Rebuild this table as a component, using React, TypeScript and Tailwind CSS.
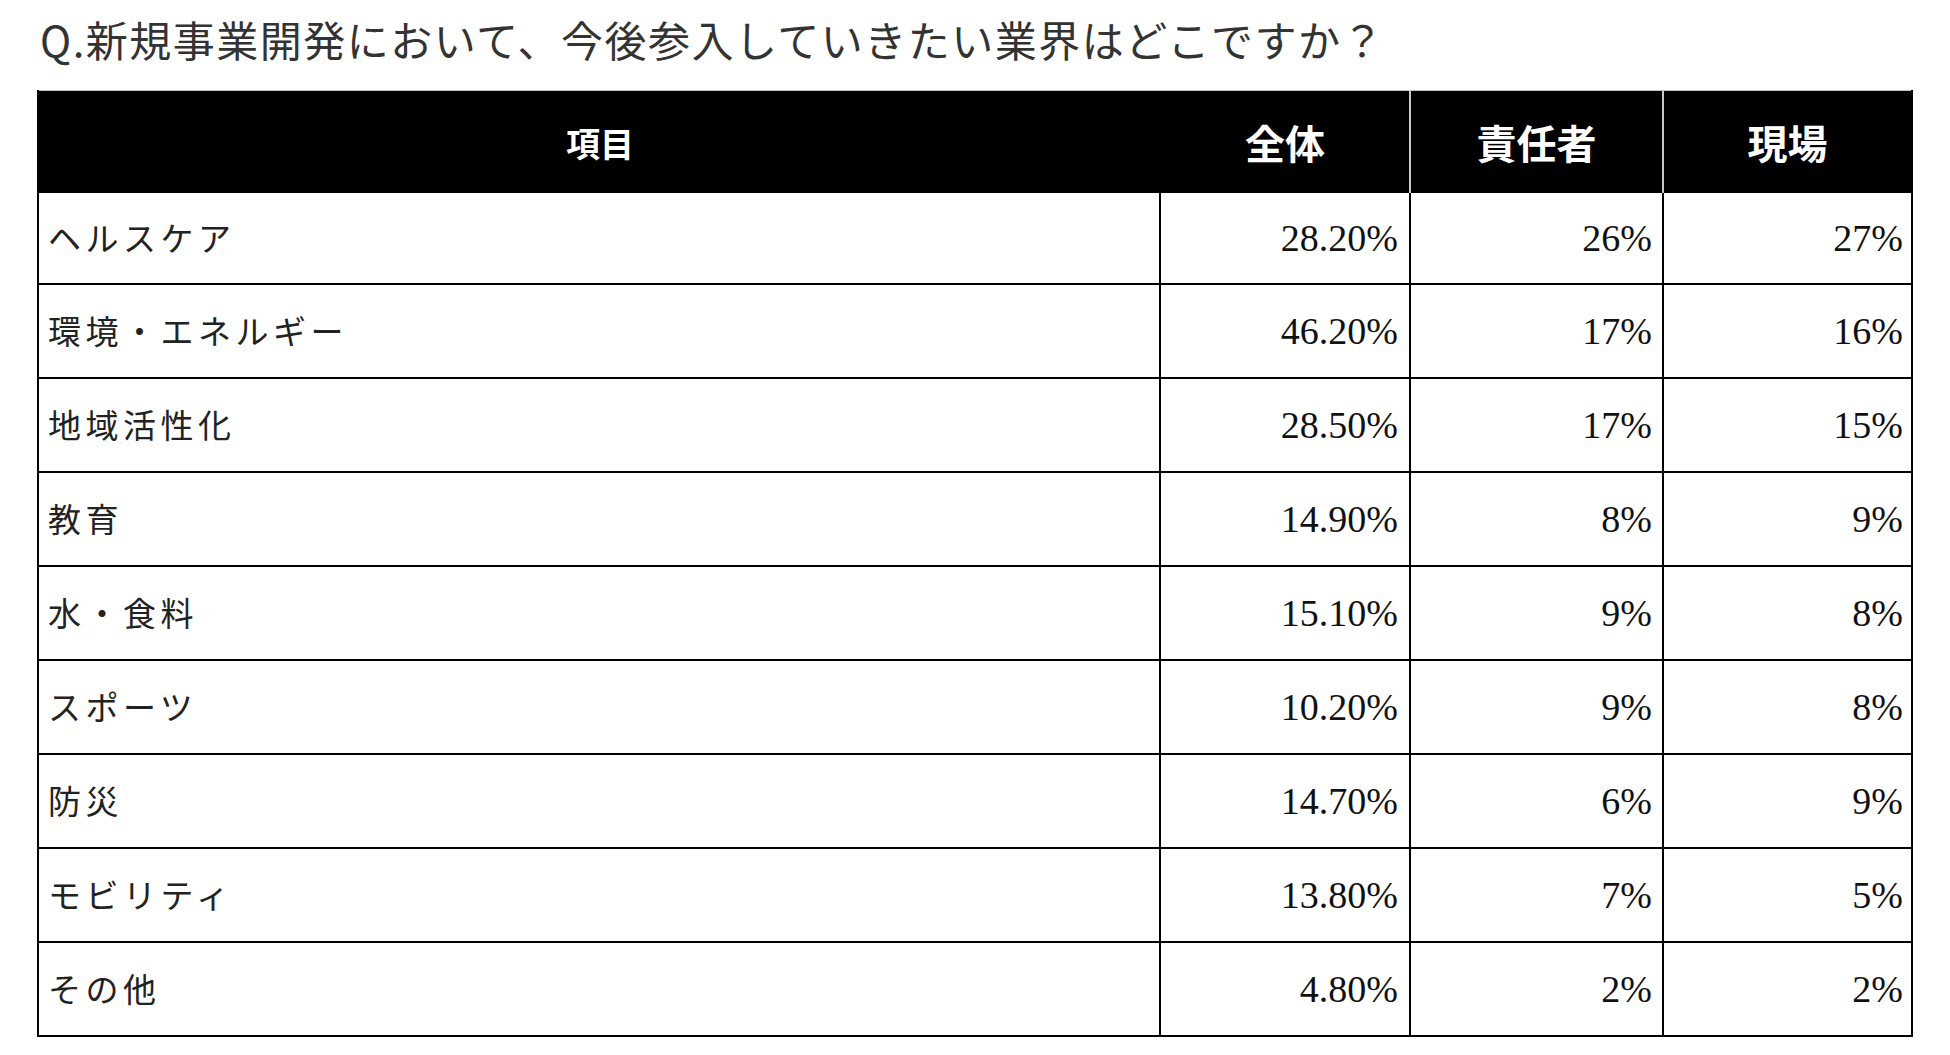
import React from "react";

const rows: [string, string, string, string][] = [
  ["ヘルスケア", "28.20%", "26%", "27%"],
  ["環境・エネルギー", "46.20%", "17%", "16%"],
  ["地域活性化", "28.50%", "17%", "15%"],
  ["教育", "14.90%", "8%", "9%"],
  ["水・食料", "15.10%", "9%", "8%"],
  ["スポーツ", "10.20%", "9%", "8%"],
  ["防災", "14.70%", "6%", "9%"],
  ["モビリティ", "13.80%", "7%", "5%"],
  ["その他", "4.80%", "2%", "2%"],
];

const jp = "font-['Noto_Sans_CJK_JP','Noto_Sans',sans-serif]";
const num = "font-['Liberation_Serif','Times_New_Roman',serif]";

export default function App() {
  return (
    <div className="w-[1950px] h-[1055px] bg-white overflow-hidden">
      <div
        className={`pt-[15px] pl-[40px] h-[66px] text-[42px] leading-[48px] tracking-[1.5px] text-[#333] ${jp}`}
      >
        Q.新規事業開発において、今後参入していきたい業界はどこですか？
      </div>
      <div className="ml-[37px] mt-[24px] w-[1876px] border-x-2 border-b-2 border-black">
        <div className="grid grid-cols-[1122px_250px_253px_1fr] h-[103px] bg-black border-t border-[#c4c4c4] text-white font-bold">
          <div className={`flex items-center justify-center text-[34px] ${jp}`}>項目</div>
          <div className={`flex items-center justify-center text-[40px] border-r-2 border-[#c8c8c8] ${jp}`}>全体</div>
          <div className={`flex items-center justify-center text-[40px] border-r-2 border-[#c8c8c8] ${jp}`}>責任者</div>
          <div className={`flex items-center justify-center text-[40px] ${jp}`}>現場</div>
        </div>
        {rows.map((r, i) => (
          <div
            key={i}
            className={`grid grid-cols-[1122px_250px_253px_1fr] ${i === 0 ? "h-[90px]" : "h-[94px] border-t-2 border-black"}`}
          >
            <div className={`flex items-center pl-[9px] text-[33px] tracking-[4.5px] text-[#222] border-r-2 border-black ${jp}`}>
              {r[0]}
            </div>
            <div className={`flex items-center justify-end pr-[11px] text-[38px] text-[#111] border-r-2 border-black ${num}`}>
              {r[1]}
            </div>
            <div className={`flex items-center justify-end pr-[10px] text-[38px] text-[#111] border-r-2 border-black ${num}`}>
              {r[2]}
            </div>
            <div className={`flex items-center justify-end pr-[8px] text-[38px] text-[#111] ${num}`}>
              {r[3]}
            </div>
          </div>
        ))}
      </div>
    </div>
  );
}
